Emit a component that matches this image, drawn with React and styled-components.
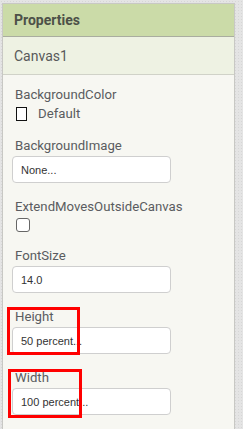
import React from "react";
import styled, { createGlobalStyle } from "styled-components";

const Global = createGlobalStyle`
  html, body { margin: 0; padding: 0; }
  body {
    background-color: #e4e4e4;
    background-image: radial-gradient(#d6d6d6 0.6px, transparent 0.8px);
    background-size: 3px 3px;
    font-family: Roboto, "Liberation Sans", Arial, sans-serif;
    overflow: hidden;
  }
`;

const Panel = styled.div`
  margin: 3px 0 0 2px;
  width: 233px;
  height: 430px;
  box-sizing: border-box;
  border: 1px solid #c8c8c4;
  border-bottom: none;
  background: #f7f7f2;
`;

const Header = styled.div`
  height: 33px;
  box-sizing: border-box;
  background: #cbdba8;
  border-bottom: 1px solid #a9ad9f;
  padding: 0 0 0 11px;
  display: flex;
  align-items: center;
  font-size: 14px;
  font-weight: 700;
  color: #4d5148;
`;

const Component = styled.div`
  height: 38px;
  box-sizing: border-box;
  background: #eef2e3;
  border-bottom: 1px solid #d0d2c8;
  padding: 0 0 0 11px;
  display: flex;
  align-items: center;
  font-size: 14px;
  color: #58595a;
`;

const Body = styled.div`
  padding: 12px 0 0 9px;
  display: flex;
  flex-direction: column;
  gap: 16px;
`;

const Prop = styled.div`
  position: relative;
  display: flex;
  flex-direction: column;
  align-items: flex-start;
  gap: 2px;
`;

const Label = styled.div`
  font-size: 13.2px;
  line-height: 16px;
  color: #5a5c60;
  padding-left: 3px;
`;

const ColorRow = styled.div`
  display: flex;
  align-items: center;
  gap: 11px;
  height: 17px;
  padding-left: 4px;
  font-size: 13.2px;
  color: #5a5c60;
`;

const Swatch = styled.span`
  width: 9px;
  height: 12px;
  border: 1.5px solid #111;
  background: #fff;
`;

const Input = styled.div`
  width: 159px;
  height: 27px;
  box-sizing: border-box;
  border: 1px solid #cfcfcf;
  border-radius: 4px;
  background: #fff;
  display: flex;
  align-items: center;
  padding-left: 8px;
  font-family: "Liberation Sans", Arial, sans-serif;
  font-size: 11px;
  color: #333;
`;

const Check = styled.span`
  margin: 1px 0 0 4px;
  width: 12px;
  height: 12px;
  border: 1px solid #666;
  border-radius: 3px;
  background: #fff;
`;

const Highlight = styled.div`
  position: absolute;
  left: ${(p) => p.$left}px;
  top: ${(p) => p.$top}px;
  width: ${(p) => p.$w}px;
  height: ${(p) => p.$h}px;
  border: 3px solid #f00;
  box-sizing: border-box;
  pointer-events: none;
`;

export default function App() {
  return (
    <>
      <Global />
      <Panel>
        <Header>Properties</Header>
        <Component>Canvas1</Component>
        <Body>
          <Prop>
            <Label>BackgroundColor</Label>
            <ColorRow>
              <Swatch />
              Default
            </ColorRow>
          </Prop>
          <Prop>
            <Label>BackgroundImage</Label>
            <Input>None...</Input>
          </Prop>
          <Prop>
            <Label>ExtendMovesOutsideCanvas</Label>
            <Check />
          </Prop>
          <Prop>
            <Label>FontSize</Label>
            <Input>14.0</Input>
          </Prop>
          <Prop>
            <Label>Height</Label>
            <Input>50 percent...</Input>
            <Highlight $left={-5} $top={-2} $w={73} $h={48} />
          </Prop>
          <Prop>
            <Label>Width</Label>
            <Input>100 percent...</Input>
            <Highlight $left={-4} $top={-1} $w={74} $h={49} />
          </Prop>
        </Body>
      </Panel>
    </>
  );
}
